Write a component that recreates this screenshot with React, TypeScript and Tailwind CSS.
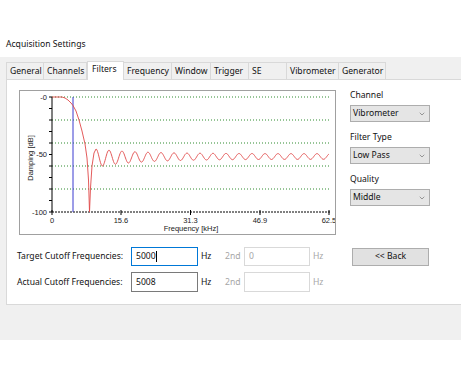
import { ChevronDown } from "lucide-react";

const tabs = [
  { name: "General", w: "w-[38px]" },
  { name: "Channels", w: "w-[43px]" },
  { name: "Filters", w: "w-[37px]", active: true },
  { name: "Frequency", w: "w-[48px]" },
  { name: "Window", w: "w-[39px]" },
  { name: "Trigger", w: "w-[38px]" },
  { name: "SE", w: "w-[38px]" },
  { name: "Vibrometer", w: "w-[52px]" },
  { name: "Generator", w: "w-[47px]" },
];

// chart box coords
const X0 = 33;
const X1 = 310;
const Y0 = 7;
const Y1 = 122;

const buildCurve = () => {
  const pts: [number, number][] = [
    [33, 7], [43, 7], [46, 8], [49, 10], [52, 13], [54, 15.5], [57, 21],
    [60, 30], [63, 41], [66, 54], [68, 68], [69.5, 90], [70.5, 122],
    [71.5, 98], [73, 76], [75, 63],
  ];
  for (let x = 96; x <= 329; x += 0.5) {
    const e = Math.exp(-(x - 96) / 45);
    const a = 2.8 + 6.2 * e;
    const c = 156.5 + 1.5 * e;
    const y = c - a * Math.cos((2 * Math.PI * (x - 96)) / 13);
    pts.push([x - 19, y - 90]);
  }
  return pts.map((p, i) => `${i ? "L" : "M"}${p[0].toFixed(1)} ${p[1].toFixed(1)}`).join(" ");
};

const Chart = () => {
  const yTicks = Array.from({ length: 11 }, (_, i) => Y0 + i * 11.5);
  const grid = [Y0, 30, 53, 76, 99];
  const xTicks = [
    { x: 33, l: "0" },
    { x: 102, l: "15.6" },
    { x: 171.5, l: "31.3" },
    { x: 241, l: "46.9" },
    { x: 310, l: "62.5" },
  ];
  return (
    <div className="w-[317px] h-[145px] border border-[#a0a0a0] bg-white shrink-0">
      <svg width="315" height="143" viewBox="1 1 315 143" style={{ fontFamily: "'Liberation Sans', Arial, sans-serif" }}>
        {grid.map((y) => (
          <line key={y} x1={X0} x2={X1 + 1} y1={y} y2={y} stroke="#2e8b2e" strokeWidth="1" strokeDasharray="1 2" />
        ))}
        <line x1={X0} x2={X1 + 1} y1={Y1} y2={Y1} stroke="#000" strokeDasharray="2 1" />
        <line x1={X0} x2={X0} y1={Y0} y2={Y1} stroke="#000" />
        {yTicks.map((y) => (
          <line key={y} x1={X0 - 3} x2={X0} y1={y} y2={y} stroke="#000" />
        ))}
        {xTicks.map((t) => (
          <g key={t.l}>
            <line x1={t.x} x2={t.x} y1={Y1 - 2} y2={Y1 + 3} stroke="#000" />
            <text x={t.x} y={133} fontSize="7.5" textAnchor="middle" fill="#222">
              {t.l}
            </text>
          </g>
        ))}
        <text x={X0 - 5} y={Y0 + 2.5} fontSize="7.5" textAnchor="end" fill="#222">-0</text>
        <text x={X0 - 5} y={64.5 + 2.5} fontSize="7.5" textAnchor="end" fill="#222">-50</text>
        <text x={X0 - 5} y={Y1 + 2.5} fontSize="7.5" textAnchor="end" fill="#222">-100</text>
        <text x={172} y={141} fontSize="7.5" textAnchor="middle" fill="#222">Frequency [kHz]</text>
        <text x={0} y={0} fontSize="7.5" textAnchor="middle" fill="#222" transform="translate(13.5 68) rotate(-90)">
          Damping [dB]
        </text>
        <line x1={54} x2={54} y1={Y0} y2={Y1} stroke="#3b3bd0" strokeWidth="1" />
        <path d={buildCurve()} fill="none" stroke="#e04848" strokeWidth="0.9" />
      </svg>
    </div>
  );
};

const Select = ({ value }: { value: string }) => (
  <div className="w-[80px] h-[17px] bg-[#e5e5e5] border border-[#adadad] flex items-center justify-between pl-[2px] pr-[3px]">
    <span>{value}</span>
    <ChevronDown size={8} strokeWidth={1.5} className="text-[#444]" />
  </div>
);

export default function App() {
  return (
    <div
      className="w-[461px] h-[374px] bg-white text-[8.6px] text-[#111] leading-[11px]"
      style={{ fontFamily: "'Noto Sans', 'Open Sans', sans-serif" }}
    >
      <div className="h-[57px] pl-[6px] pt-[39px]">Acquisition Settings</div>
      <div className="h-[283px] bg-[#f0f0f0] pl-[6px] pt-[4px]">
        <div className="flex items-end h-[18px]">
          {tabs.map((t) =>
            t.active ? (
              <div
                key={t.name}
                className={`${t.w} h-[19px] -mb-px bg-white border border-b-0 border-[#d9d9d9] pl-[4px] pt-[2px] relative z-10`}
              >
                {t.name}
              </div>
            ) : (
              <div
                key={t.name}
                className={`${t.w} h-[17px] border border-b-0 border-l-0 first:border-l border-[#d9d9d9] pl-[3px] pt-[3px]`}
              >
                {t.name}
              </div>
            )
          )}
        </div>
        <div className="h-[226px] bg-white border border-[#d9d9d9] border-r-0 pl-[12px] pt-[10px]">
          <div className="flex">
            <Chart />
            <div className="ml-[14px] flex flex-col">
              <div className="h-[11px] mb-[4px]">Channel</div>
              <Select value="Vibrometer" />
              <div className="h-[11px] mt-[10px] mb-[4px]">Filter Type</div>
              <Select value="Low Pass" />
              <div className="h-[11px] mt-[10px] mb-[4px]">Quality</div>
              <Select value="Middle" />
            </div>
          </div>
          <div className="mt-[12px] flex flex-col gap-[6px]">
            <div className="flex items-center h-[19px] -ml-[2px]">
              <div className="w-[114px]">Target Cutoff Frequencies:</div>
              <div className="w-[67px] h-[19px] border border-[#0078d7] flex items-center pl-[4px]">
                5000<span className="w-px h-[11px] bg-black inline-block" />
              </div>
              <div className="w-[27px] pl-[3px]">Hz</div>
              <div className="w-[19px] text-[#a6a6a6]">2nd</div>
              <div className="w-[66px] h-[19px] border border-[#d9d9d9] flex items-center pl-[4px] text-[#a6a6a6]">0</div>
              <div className="w-[42px] pl-[3px] text-[#a6a6a6]">Hz</div>
              <div className="w-[77px] h-[18px] bg-[#e1e1e1] border border-[#adadad] flex items-center justify-center">
                &lt;&lt; Back
              </div>
            </div>
            <div className="flex items-center h-[20px] -ml-[2px]">
              <div className="w-[114px]">Actual Cutoff Frequencies:</div>
              <div className="w-[67px] h-[20px] border border-[#7a7a7a] flex items-center pl-[4px]">5008</div>
              <div className="w-[27px] pl-[3px]">Hz</div>
              <div className="w-[19px] text-[#a6a6a6]">2nd</div>
              <div className="w-[66px] h-[20px] border border-[#d9d9d9]" />
              <div className="w-[42px] pl-[3px] text-[#a6a6a6]">Hz</div>
            </div>
          </div>
        </div>
      </div>
    </div>
  );
}
